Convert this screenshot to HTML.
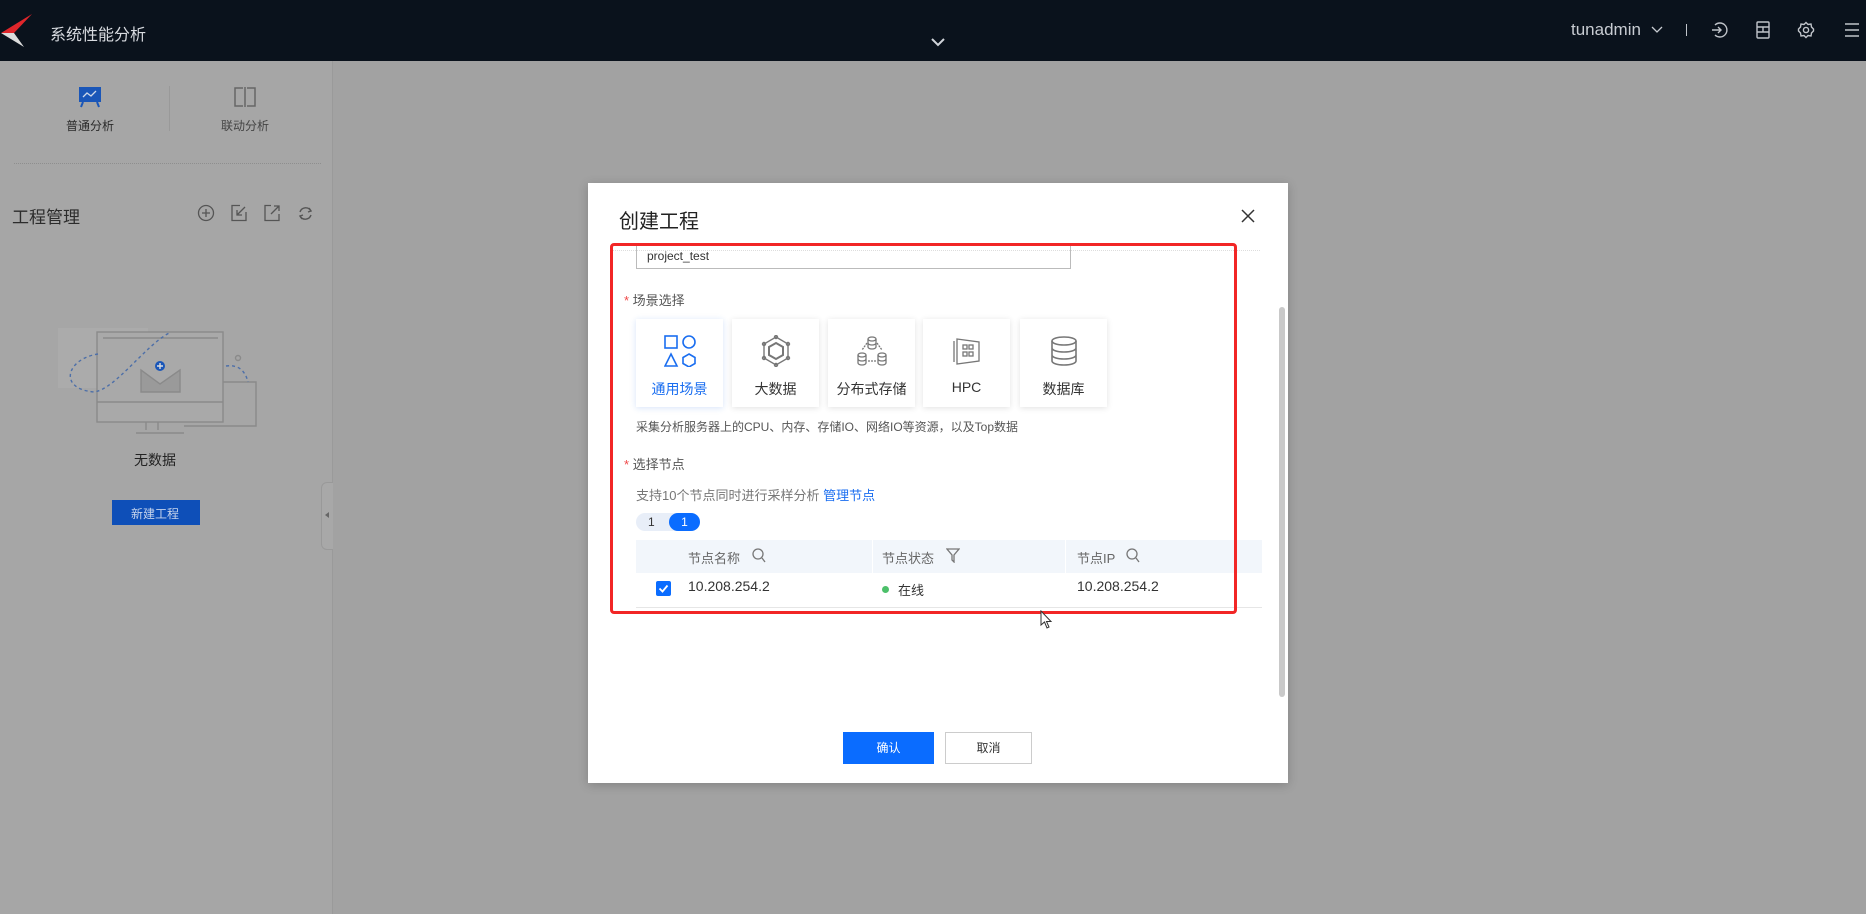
<!DOCTYPE html>
<html><head><meta charset="utf-8"><style>
*{margin:0;padding:0;box-sizing:border-box}
body{width:1866px;height:914px;overflow:hidden;position:relative;background:#a2a2a2;font-family:"Liberation Sans","Noto Sans CJK SC",sans-serif;color:#333}
.a{position:absolute}
.hdr{left:0;top:0;width:1866px;height:61px;background:#0a121c}
.side{left:0;top:61px;width:333px;height:853px;background:#a6a6a6;border-right:1px solid #9a9a9a}
.modal{left:588px;top:183px;width:700px;height:600px;background:#fff;box-shadow:0 2px 10px rgba(0,0,0,.2)}
.t{white-space:nowrap}
.card{width:87px;height:88px;background:#fff;box-shadow:0 1px 6px rgba(0,0,0,.12);top:319px}
.card .lbl{position:absolute;left:0;width:87px;top:60px;text-align:center;font-size:14px;color:#333}
.card svg{position:absolute;left:28px;top:16px}
</style></head><body>
<div class="a hdr"></div>
<svg class="a" style="left:0;top:13px" width="34" height="36" viewBox="0 0 34 36"><path d="M32 1 L1 20 L14 20 Z" fill="#e0262b"/><path d="M1 20 L14 20 L24 34 Z" fill="#dcdcdc"/></svg>
<div class="a t" style="left:50px;top:21px;font-size:16px;color:#d8dbe0">系统性能分析</div>
<svg class="a" style="left:930px;top:37px" width="16" height="10"><path d="M2 2 L8 8 L14 2" stroke="#d0d4da" stroke-width="2" fill="none"/></svg>
<div class="a t" style="left:1571px;top:20px;font-size:17px;color:#c8ccd2">tunadmin</div>
<svg class="a" style="left:1651px;top:26px" width="12" height="8"><path d="M1 1 L6 6 L11 1" stroke="#c8ccd2" stroke-width="1.3" fill="none"/></svg>
<div class="a" style="left:1686px;top:24px;width:1px;height:12px;background:#c0c4ca"></div>
<svg class="a" style="left:1710px;top:21px" width="18" height="18" fill="none" stroke="#c0c4ca" stroke-width="1.4"><path d="M5 4 A7 7 0 1 1 5 14"/><path d="M2 9 H11 M8 6 L11 9 L8 12"/></svg>
<svg class="a" style="left:1755px;top:21px" width="16" height="18" fill="none" stroke="#c0c4ca" stroke-width="1.4"><rect x="2" y="1" width="12" height="16" rx="1"/><path d="M2 6 H14 M2 11 H14 M8 6 V11"/></svg>
<svg class="a" style="left:1797px;top:21px" width="18" height="18" fill="none" stroke="#c0c4ca" stroke-width="1.4"><circle cx="9" cy="9" r="2.6"/><path d="M9 1.5 L11 3.5 L14 3 L14.5 6 L16.5 8 L16.5 10 L14.5 12 L14 15 L11 14.5 L9 16.5 L7 14.5 L4 15 L3.5 12 L1.5 10 L1.5 8 L3.5 6 L4 3 L7 3.5 Z"/></svg>
<svg class="a" style="left:1844px;top:22px" width="16" height="16" stroke="#c0c4ca" stroke-width="1.5"><path d="M1 2 H15 M1 8 H15 M1 14 H15"/></svg>

<div class="a side"></div>
<svg class="a" style="left:78px;top:86px" width="24" height="22"><rect x="1" y="1" width="22" height="15" fill="#1a56b8"/><path d="M5 11 L9 7 L13 10 L18 5" stroke="#cfd8e8" stroke-width="1.3" fill="none"/><path d="M5 16 L3 21 M19 16 L21 21" stroke="#1a56b8" stroke-width="2"/></svg>
<div class="a t" style="left:66px;top:117px;font-size:12px;color:#2a2a2a">普通分析</div>
<div class="a" style="left:169px;top:86px;width:1px;height:45px;background:#999"></div>
<svg class="a" style="left:233px;top:87px" width="24" height="20" fill="none" stroke="#666" stroke-width="1.5"><path d="M10 1 H2 V19 H10 M14 1 H22 V19 H14 M12 0 V20"/></svg>
<div class="a t" style="left:221px;top:117px;font-size:12px;color:#444">联动分析</div>
<div class="a" style="left:14px;top:163px;width:307px;border-top:1px dotted #8e8e8e"></div>
<div class="a t" style="left:12px;top:203px;font-size:17px;color:#2c2c2c">工程管理</div>
<svg class="a" style="left:197px;top:204px" width="18" height="18" fill="none" stroke="#555" stroke-width="1.3"><circle cx="9" cy="9" r="7.5"/><path d="M9 5 V13 M5 9 H13"/></svg>
<svg class="a" style="left:230px;top:204px" width="18" height="18" fill="none" stroke="#555" stroke-width="1.3"><path d="M10 1.5 H2 V16.5 H16 V8"/><path d="M15 3 L7 11 M7 6 V11 H12"/></svg>
<svg class="a" style="left:263px;top:204px" width="18" height="18" fill="none" stroke="#555" stroke-width="1.3"><path d="M8 1.5 H2 V16.5 H16 V10"/><path d="M8 10 L16 2 M11 2 H16 V7"/></svg>
<svg class="a" style="left:297px;top:205px" width="17" height="17" fill="none" stroke="#555" stroke-width="1.4"><path d="M3 7 A6 6 0 0 1 14 6 M14 10 A6 6 0 0 1 3 11"/><path d="M12 3 L14 6 L11 7 M5 14 L3 11 L6 10"/></svg>
<svg class="a" style="left:56px;top:314px" width="205" height="124" fill="none" stroke="#8a8a8a" stroke-width="1.4">
<rect x="2" y="14" width="90" height="60" fill="#ababab" stroke="none"/>
<rect x="41" y="18" width="126" height="90" fill="#a9a9a9"/>
<path d="M41 88 H167 M102 108 V116 M90 108 V116 M80 119 H128"/>
<path d="M47 24 H162"/>
<path d="M85 56 V78 H124 V56 L104 70 Z" fill="#9a9a9a"/>
<circle cx="104" cy="52" r="5" fill="#1a56b8" stroke="none"/>
<path d="M101 52 H107 M104 49 V55" stroke="#ddd"/>
<path d="M167 68 H200 V112 H128" />
<path d="M42 40 C10 45,2 75,38 78 C60 75,90 30,115 18" stroke="#4d6fa8" stroke-dasharray="3 3"/>
<path d="M170 52 C185 50,190 60,192 68" stroke="#4d6fa8" stroke-dasharray="3 3"/>
<circle cx="182" cy="44" r="2.5"/>
</svg>
<div class="a t" style="left:134px;top:450px;font-size:14px;color:#222">无数据</div>
<div class="a" style="left:112px;top:500px;width:88px;height:25px;background:#0e4fb8"></div>
<div class="a t" style="left:131px;top:505px;font-size:12px;color:#c6d4ec">新建工程</div>
<div class="a" style="left:321px;top:482px;width:12px;height:68px;background:#a8a8a8;border:1px solid #999;border-right:none;border-radius:6px 0 0 6px"></div>
<div class="a" style="left:325px;top:512px;width:0;height:0;border:3px solid transparent;border-right:4px solid #666;border-left:none"></div>

<div class="a modal"></div>
<div class="a t" style="left:619px;top:205px;font-size:20px;color:#222">创建工程</div>
<svg class="a" style="left:1241px;top:209px" width="14" height="14" stroke="#333" stroke-width="1.5"><path d="M1 1 L13 13 M13 1 L1 13"/></svg>
<div class="a" style="left:612px;top:250px;width:648px;border-top:1px dotted #ddd"></div>
<div class="a" style="left:636px;top:246px;width:435px;height:23px;border:1px solid #bbb;border-top:none"></div>
<div class="a t" style="left:647px;top:249px;font-size:12px;color:#333">project_test</div>
<div class="a t" style="left:624px;top:290px;font-size:13px;color:#555"><span style="color:#f04848">*</span> 场景选择</div>

<div class="a card" style="left:636px;box-shadow:0 1px 6px rgba(30,100,220,.18)"><svg width="32" height="32" fill="none" stroke="#1a6ef0" stroke-width="1.6"><rect x="1" y="1" width="12" height="12"/><circle cx="25" cy="7" r="6"/><path d="M7 19 L13 31 H1 Z"/><path d="M25 19 L31 22.5 V28.5 L25 32 L19 28.5 V22.5 Z"/></svg><div class="lbl" style="color:#1a6ef0">通用场景</div></div>
<div class="a card" style="left:732px"><svg width="32" height="32" fill="none" stroke="#777" stroke-width="1.4"><path d="M16 2 L28 9 V23 L16 30 L4 23 V9 Z"/><path d="M16 8 L23 12 V20 L16 24 L9 20 V12 Z" stroke-width="2"/><circle cx="16" cy="2" r="1.5"/><circle cx="28" cy="9" r="1.5"/><circle cx="28" cy="23" r="1.5"/><circle cx="16" cy="30" r="1.5"/><circle cx="4" cy="23" r="1.5"/><circle cx="4" cy="9" r="1.5"/></svg><div class="lbl">大数据</div></div>
<div class="a card" style="left:828px"><svg width="32" height="32" fill="none" stroke="#777" stroke-width="1.3"><ellipse cx="16" cy="4" rx="4" ry="2"/><path d="M12 4 V12 A4 2 0 0 0 20 12 V4 M12 8 A4 2 0 0 0 20 8"/><ellipse cx="6" cy="20" rx="4" ry="2"/><path d="M2 20 V28 A4 2 0 0 0 10 28 V20 M2 24 A4 2 0 0 0 10 24"/><ellipse cx="26" cy="20" rx="4" ry="2"/><path d="M22 20 V28 A4 2 0 0 0 30 28 V20 M22 24 A4 2 0 0 0 30 24"/><path d="M11 8 L6 15 M21 8 L26 15 M12 26 H20" stroke-dasharray="2 1"/></svg><div class="lbl">分布式存储</div></div>
<div class="a card" style="left:923px"><svg width="32" height="32" fill="none" stroke="#777" stroke-width="1.3"><path d="M6 4 L28 7 V26 L6 29 Z"/><path d="M3 6 V27"/><rect x="12" y="10" width="4" height="4"/><rect x="18" y="10" width="4" height="4"/><rect x="12" y="17" width="4" height="4"/><rect x="18" y="17" width="4" height="4"/></svg><div class="lbl">HPC</div></div>
<div class="a card" style="left:1020px"><svg width="32" height="32" fill="none" stroke="#777" stroke-width="1.6"><ellipse cx="16" cy="6" rx="12" ry="4"/><path d="M4 6 V26 A12 4 0 0 0 28 26 V6 M4 13 A12 4 0 0 0 28 13 M4 20 A12 4 0 0 0 28 20"/></svg><div class="lbl">数据库</div></div>

<div class="a t" style="left:636px;top:418px;font-size:12px;color:#555">采集分析服务器上的CPU、内存、存储IO、网络IO等资源，以及Top数据</div>
<div class="a t" style="left:624px;top:454px;font-size:13px;color:#555"><span style="color:#f04848">*</span> 选择节点</div>
<div class="a t" style="left:636px;top:485px;font-size:13px;color:#777">支持10个节点同时进行采样分析 <span style="color:#1a6ef0">管理节点</span></div>
<div class="a" style="left:636px;top:513px;width:64px;height:18px;background:#e8eef8;border-radius:9px"></div>
<div class="a t" style="left:648px;top:515px;font-size:12px;color:#333">1</div>
<div class="a" style="left:669px;top:513px;width:31px;height:18px;background:#0a6cff;border-radius:9px;color:#fff;font-size:12px;text-align:center;line-height:18px">1</div>
<div class="a" style="left:636px;top:540px;width:626px;height:33px;background:#f2f6fb"></div>
<div class="a" style="left:872px;top:540px;width:1px;height:33px;background:#fff"></div>
<div class="a" style="left:1065px;top:540px;width:1px;height:33px;background:#fff"></div>
<div class="a t" style="left:688px;top:548px;font-size:13px;color:#666">节点名称</div>
<svg class="a" style="left:752px;top:548px" width="14" height="15" fill="none" stroke="#777" stroke-width="1.3"><circle cx="6" cy="6" r="5"/><path d="M10 10 L13 14"/></svg>
<div class="a t" style="left:882px;top:548px;font-size:13px;color:#666">节点状态</div>
<svg class="a" style="left:946px;top:548px" width="14" height="15" fill="none" stroke="#777" stroke-width="1.3"><path d="M1 1 H13 L8 7 V14 L6 12 V7 Z"/></svg>
<div class="a t" style="left:1077px;top:548px;font-size:13px;color:#666">节点IP</div>
<svg class="a" style="left:1126px;top:548px" width="14" height="15" fill="none" stroke="#777" stroke-width="1.3"><circle cx="6" cy="6" r="5"/><path d="M10 10 L13 14"/></svg>
<div class="a" style="left:656px;top:581px;width:15px;height:15px;background:#0a6cff;border-radius:2px"></div>
<svg class="a" style="left:656px;top:581px" width="15" height="15"><path d="M3.5 7.5 L6.5 10.5 L11.5 4.5" stroke="#fff" stroke-width="1.8" fill="none"/></svg>
<div class="a t" style="left:688px;top:578px;font-size:14px;color:#333">10.208.254.2</div>
<div class="a" style="left:882px;top:586px;width:7px;height:7px;background:#4cc06a;border-radius:50%"></div>
<div class="a t" style="left:898px;top:580px;font-size:13px;color:#333">在线</div>
<div class="a t" style="left:1077px;top:578px;font-size:14px;color:#333">10.208.254.2</div>
<div class="a" style="left:636px;top:607px;width:626px;height:1px;background:#e6e6e6"></div>
<div class="a" style="left:610px;top:243px;width:627px;height:371px;border:3px solid #f22626;border-radius:4px"></div>
<div class="a" style="left:1279px;top:307px;width:6px;height:390px;background:#c9c9c9;border-radius:3px"></div>
<svg class="a" style="left:1040px;top:610px" width="14" height="20"><path d="M1 1 V15 L4.5 12 L7 18 L9 17 L6.5 11.5 L11 11.5 Z" fill="#fff" stroke="#333" stroke-width="1"/></svg>
<div class="a" style="left:843px;top:732px;width:91px;height:32px;background:#0a6cff;color:#fff;font-size:12px;text-align:center;line-height:32px">确认</div>
<div class="a" style="left:945px;top:732px;width:87px;height:32px;background:#fff;border:1px solid #ccc;color:#333;font-size:12px;text-align:center;line-height:30px">取消</div>
</body></html>
